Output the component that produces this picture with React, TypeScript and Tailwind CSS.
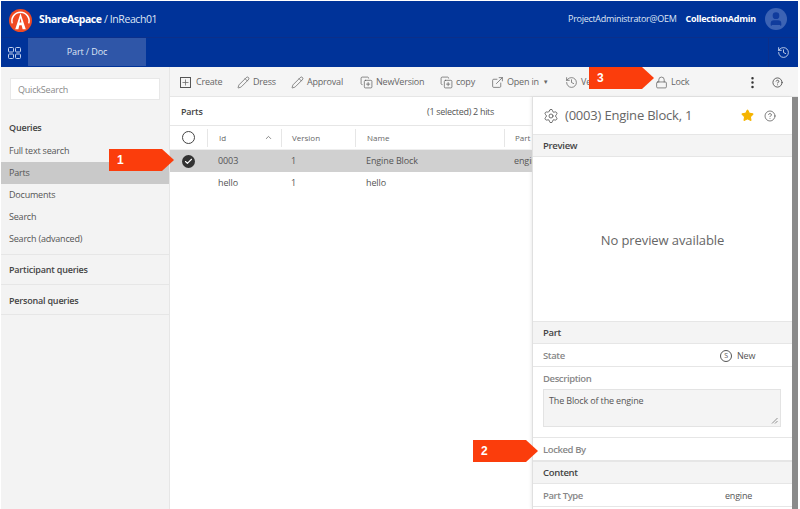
import { Check, CopyPlus, ExternalLink, History, Lock, Pencil, Plus, Settings, Star, CircleHelp, MoreVertical, ChevronUp, User } from "lucide-react"

const queries = ["Full text search", "Parts", "Documents", "Search", "Search (advanced)"]

function Logo() {
  return (
    <svg viewBox="0 0 24 24" className="h-[23px] w-[23px] shrink-0">
      <circle cx="12" cy="12" r="12" fill="#f04a23" />
      <path d="M3.4 15 A9 9 0 1 1 20.6 15" fill="none" stroke="#fff" strokeWidth="1.6" />
      <path d="M12 4.5 L6.5 21 H9.8 L10.8 17 H13.2 L14.2 21 H17.5 Z M12 9.5 L13 14 H11 Z" fill="#fff" fillRule="evenodd" />
    </svg>
  )
}

function GridIcon() {
  return (
    <svg viewBox="0 0 13 12" className="h-[12px] w-[13px] fill-none stroke-[#c3d0ec]" strokeWidth="1">
      <rect x="0.5" y="0.5" width="5" height="4.5" rx="1" />
      <rect x="7.5" y="0.5" width="5" height="4.5" rx="1" />
      <rect x="0.5" y="7" width="5" height="4.5" rx="1" />
      <rect x="7.5" y="7" width="5" height="4.5" rx="1" />
    </svg>
  )
}

function Callout({ n, className }: { n: string; className: string }) {
  return (
    <div
      className={`absolute flex h-[22px] items-center bg-[#fb3d0c] pl-[8px] font-['Liberation_Sans',sans-serif] text-[12px] font-bold text-white [clip-path:polygon(0_0,calc(100%-12px)_0,100%_50%,calc(100%-12px)_100%,0_100%)] ${className}`}
    >
      {n}
    </div>
  )
}

function Tool({ icon, label, caret, className = "" }: { icon: React.ReactNode; label: string; caret?: boolean; className?: string }) {
  return (
    <div className={`flex items-center gap-[3px] ${className}`}>
      {icon}
      <span>{label}</span>
      {caret ? <span className="ml-[1px] text-[6px]">▼</span> : null}
    </div>
  )
}

function SectionHead({ label }: { label: string }) {
  return <div className="flex h-[23px] shrink-0 items-center border-y border-[#e6e6e6] bg-[#f4f4f4] pl-[10px] pt-[2px] text-[9.5px] font-semibold tracking-[-0.3px] text-[#444]">{label}</div>
}

function Field({ label, labelClass = "", children }: { label: string; labelClass?: string; children?: React.ReactNode }) {
  return (
    <div className="flex h-[23px] shrink-0 items-center border-b border-[#e6e6e6] pl-[10px] pt-[2px] text-[9.5px] font-semibold tracking-[-0.4px] text-[#888]">
      <span className={labelClass}>{label}</span>
      {children}
    </div>
  )
}

export default function App() {
  const iconCls = "h-[13px] w-[13px] shrink-0 text-[#555]"
  return (
    <div className="relative h-[509px] w-[800px] overflow-hidden bg-white pl-px pr-[2px] pt-px font-['Open_Sans',sans-serif] text-[#555]">
      {/* top bars */}
      <header className="flex h-[37px] items-center border-b border-[#0b2f8a] bg-[#003399] pl-[8px] pr-[11px] text-white">
        <div className="flex items-center pt-[2px]">
          <Logo />
          <div className="ml-[7px] text-[10.5px] tracking-[-0.4px]">
            <span className="font-bold">ShareAspace</span>
            <span className="text-[#dfe6f5]"> / InReach01</span>
          </div>
        </div>
        <span className="ml-auto text-[9px] tracking-[-0.3px] text-[#dfe6f5]">ProjectAdministrator@OEM</span>
        <span className="ml-[9px] text-[9px] font-bold tracking-[-0.25px]">CollectionAdmin</span>
        <div className="ml-[9px] flex h-[22px] w-[22px] items-center justify-center overflow-hidden rounded-full bg-[#3c63b4]">
          <User className="h-[16px] w-[16px] fill-[#103c9d] text-[#103c9d]" />
        </div>
      </header>
      <nav className="flex h-[29px] bg-[#003399]">
        <div className="flex w-[27px] items-center justify-center">
          <GridIcon />
        </div>
        <div className="flex h-[28px] w-[118px] items-center justify-center bg-[#2f56a8] text-[9px] tracking-[-0.1px] text-[#dfe6f5]">Part / Doc</div>
        <div className="ml-auto flex w-[30px] items-center justify-center border-l border-[#0b2f8a]">
          <History className="h-[13px] w-[13px] text-[#dfe6f5]" strokeWidth={1.5} />
        </div>
      </nav>

      <div className="flex h-[442px]">
        {/* sidebar */}
        <aside className="w-[169px] shrink-0 border-r border-[#e6e6e6] bg-[#f3f3f3] text-[9px] tracking-[-0.2px]">
          <div className="px-[9px] pt-[11px]">
            <div className="flex h-[22px] items-center border border-[#e8e8e8] bg-white pl-[7px] pt-px text-[#8a8a8a]">QuickSearch</div>
          </div>
          <div className="pl-[8px] pt-[18px] pb-[2px] font-semibold leading-[20px] text-[#444]">Queries</div>
          {queries.map((q) => (
            <div key={q} className={`flex h-[22px] items-center pl-[8px] ${q === "Parts" ? "bg-[#c9c9c9]" : ""}`}>
              {q}
            </div>
          ))}
          <div className="mt-[4px] flex h-[31px] items-center border-y border-[#e6e6e6] pl-[8px] pt-px font-semibold text-[#444]">Participant queries</div>
          <div className="flex h-[30px] items-center border-b border-[#e6e6e6] pl-[8px] pt-[2px] font-semibold text-[#444]">Personal queries</div>
        </aside>

        <main className="flex min-w-0 flex-1 flex-col">
          {/* toolbar */}
          <div className="flex h-[30px] shrink-0 items-center border-b border-[#e6e6e6] bg-[#f5f5f5] pl-[10px] pr-[15px] pt-px text-[9px] tracking-[-0.2px] text-[#666]">
            <Tool icon={<span className="mr-[2px] flex h-[11px] w-[11px] items-center justify-center border border-[#555]"><Plus className="h-[9px] w-[9px]" /></span>} label="Create" className="w-[57px]" />
            <Tool icon={<Pencil className={iconCls} strokeWidth={1.25} />} label="Dress" className="w-[54px]" />
            <Tool icon={<Pencil className={iconCls} strokeWidth={1.25} />} label="Approval" className="w-[69px]" />
            <Tool icon={<CopyPlus className={iconCls} strokeWidth={1.25} />} label="NewVersion" className="w-[80px]" />
            <Tool icon={<CopyPlus className={iconCls} strokeWidth={1.25} />} label="copy" className="w-[51px]" />
            <Tool icon={<ExternalLink className={iconCls} strokeWidth={1.25} />} label="Open in" caret className="w-[74px]" />
            <Tool icon={<History className={iconCls} strokeWidth={1.25} />} label="Versions" className="w-[90px]" />
            <Tool icon={<Lock className={iconCls} strokeWidth={1.25} />} label="Lock" />
            <MoreVertical className="ml-auto h-[15px] w-[15px] text-[#333]" />
            <CircleHelp className="ml-[12px] h-[11px] w-[11px] text-[#555]" />
          </div>

          <div className="flex min-h-0 flex-1">
            {/* list */}
            <section className="relative min-w-0 flex-1 overflow-hidden text-[9px]">
              <div className="flex h-[29px] items-center border-b border-[#e6e6e6] pl-[11px] pr-[38px] pt-[2px]">
                <span className="text-[9px] font-semibold tracking-[-0.2px] text-[#444]">Parts</span>
                <span className="ml-auto tracking-[-0.3px]">(1 selected) 2 hits</span>
              </div>
              <div className="flex h-[24px] w-[430px] items-center border-b border-[#eee] text-[8px] text-[#666]">
                <div className="flex w-[37px] justify-center"><span className="h-[13px] w-[13px] rounded-full border border-[#444]" /></div>
                <div className="flex h-[18px] w-[74px] items-center justify-between border-l border-[#e6e6e6] pl-[11px] pr-[8px]">Id<ChevronUp className="h-[9px] w-[9px]" /></div>
                <div className="flex h-[18px] w-[74px] items-center border-l border-[#e6e6e6] pl-[10px]">Version</div>
                <div className="flex h-[18px] w-[149px] items-center border-l border-[#e6e6e6] pl-[11px]">Name</div>
                <div className="flex h-[18px] items-center whitespace-nowrap border-l border-[#e6e6e6] pl-[10px]">Part type</div>
              </div>
              <div className="flex h-[22px] w-[430px] items-center bg-[#d0d0d0] tracking-[-0.1px]">
                <div className="flex w-[37px] justify-center">
                  <span className="flex h-[13px] w-[13px] items-center justify-center rounded-full bg-[#333]"><Check className="h-[9px] w-[9px] text-white" strokeWidth={3} /></span>
                </div>
                <div className="w-[74px] pl-[11px]">0003</div>
                <div className="w-[74px] pl-[10px]">1</div>
                <div className="w-[149px] pl-[11px]">Engine Block</div>
                <div className="pl-[10px]">engine</div>
              </div>
              <div className="flex h-[22px] items-center tracking-[-0.1px]">
                <div className="w-[37px]" />
                <div className="w-[74px] pl-[11px]">hello</div>
                <div className="w-[74px] pl-[10px]">1</div>
                <div className="w-[149px] pl-[11px]">hello</div>
              </div>
            </section>

            {/* detail */}
            <section className="flex w-[260px] shrink-0 flex-col border-l border-[#e0e0e0] bg-white shadow-[-1px_0_3px_rgba(0,0,0,0.08)]">
              <div className="flex h-[37px] shrink-0 items-center pl-[10px] pr-[16px]">
                <Settings className="h-[16px] w-[16px] text-[#555]" strokeWidth={1.25} />
                <span className="ml-[6px] text-[13px] tracking-[-0.2px] text-[#666]">(0003) Engine Block, 1</span>
                <Star className="ml-auto h-[13px] w-[13px] fill-[#f5b400] text-[#f5b400]" />
                <CircleHelp className="ml-[10px] h-[12px] w-[12px] text-[#555]" strokeWidth={1.5} />
              </div>
              <SectionHead label="Preview" />
              <div className="flex h-[164px] shrink-0 items-center justify-center pt-[3px] text-[13px] tracking-[-0.1px] text-[#666]">No preview available</div>
              <SectionHead label="Part" />
              <Field label="State" labelClass="w-[177px]">
                <span className="flex items-center gap-[5px] font-normal tracking-[-0.2px] text-[#555]">
                  <span className="flex h-[12px] w-[12px] items-center justify-center rounded-full border border-[#555] text-[7px]">S</span>
                  <span className="text-[9px]">New</span>
                </span>
              </Field>
              <div className="flex h-[71px] shrink-0 flex-col border-b border-[#e6e6e6] pl-[10px] pr-[11px] pt-[5px]">
                <span className="text-[9.5px] font-semibold leading-[14px] tracking-[-0.4px] text-[#888]">Description</span>
                <div className="relative mt-[3px] h-[38px] border border-[#e3e3e3] bg-[#f4f4f4] pl-[5px] pt-[4px] text-[9px] tracking-[-0.15px] text-[#555]">
                  The Block of the engine
                  <svg viewBox="0 0 7 7" className="absolute bottom-[2px] right-[2px] h-[7px] w-[7px] stroke-[#777]" strokeWidth="0.8">
                    <path d="M1 6.5 L6.5 1 M4 6.5 L6.5 4" />
                  </svg>
                </div>
              </div>
              <Field label="Locked By" />
              <SectionHead label="Content" />
              <Field label="Part Type" labelClass="w-[182px]">
                <span className="text-[9px] font-normal tracking-[-0.2px] text-[#555]">engine</span>
              </Field>
            </section>
            <div className="w-[6px] shrink-0 bg-[#8a8a8a]" />
          </div>
        </main>
      </div>

      <Callout n="1" className="left-[109px] top-[149px] w-[65px]" />
      <Callout n="2" className="left-[473px] top-[440px] w-[65px]" />
      <Callout n="3" className="left-[589px] top-[67px] w-[65px]" />
    </div>
  )
}
